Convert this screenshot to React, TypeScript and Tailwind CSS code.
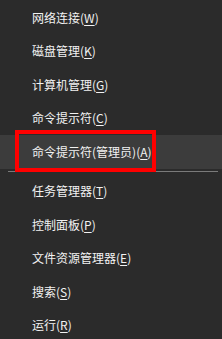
import React from "react";

type Item = { label: string; key: string; active?: boolean };

const top: Item[] = [
  { label: "网络连接", key: "W" },
  { label: "磁盘管理", key: "K" },
  { label: "计算机管理", key: "G" },
  { label: "命令提示符", key: "C" },
  { label: "命令提示符(管理员)", key: "A", active: true },
];

const bottom: Item[] = [
  { label: "任务管理器", key: "T" },
  { label: "控制面板", key: "P" },
  { label: "文件资源管理器", key: "E" },
  { label: "搜索", key: "S" },
  { label: "运行", key: "R" },
];

function Row({ item }: { item: Item }) {
  return (
    <div
      className={`h-[33.5px] flex items-center pl-[32px] text-[12px] leading-none text-[#f2f2f2] ${
        item.active ? "bg-[#3c3c3c]" : ""
      }`}
    >
      <span>
        {item.label}(<span className="underline underline-offset-[2px]">{item.key}</span>)
      </span>
    </div>
  );
}

export default function App() {
  return (
    <div
      className="relative w-[222px] h-[339px] bg-[#2b2b2b] overflow-hidden"
      style={{ fontFamily: '"Noto Sans CJK SC", "Noto Sans", sans-serif' }}
    >
      <div className="pt-[1px] flex flex-col">
        {top.map((it) => (
          <Row key={it.label} item={it} />
        ))}
        <div className="mt-[2px] ml-[8px] mr-[4px] h-px bg-[#7a7a7a]" />
        <div className="mt-[3px] flex flex-col">
          {bottom.map((it) => (
            <Row key={it.label} item={it} />
          ))}
        </div>
      </div>
      <div className="absolute left-[15px] top-[130px] w-[141px] h-[42px] border-[4px] border-[#ff0000]" />
    </div>
  );
}
